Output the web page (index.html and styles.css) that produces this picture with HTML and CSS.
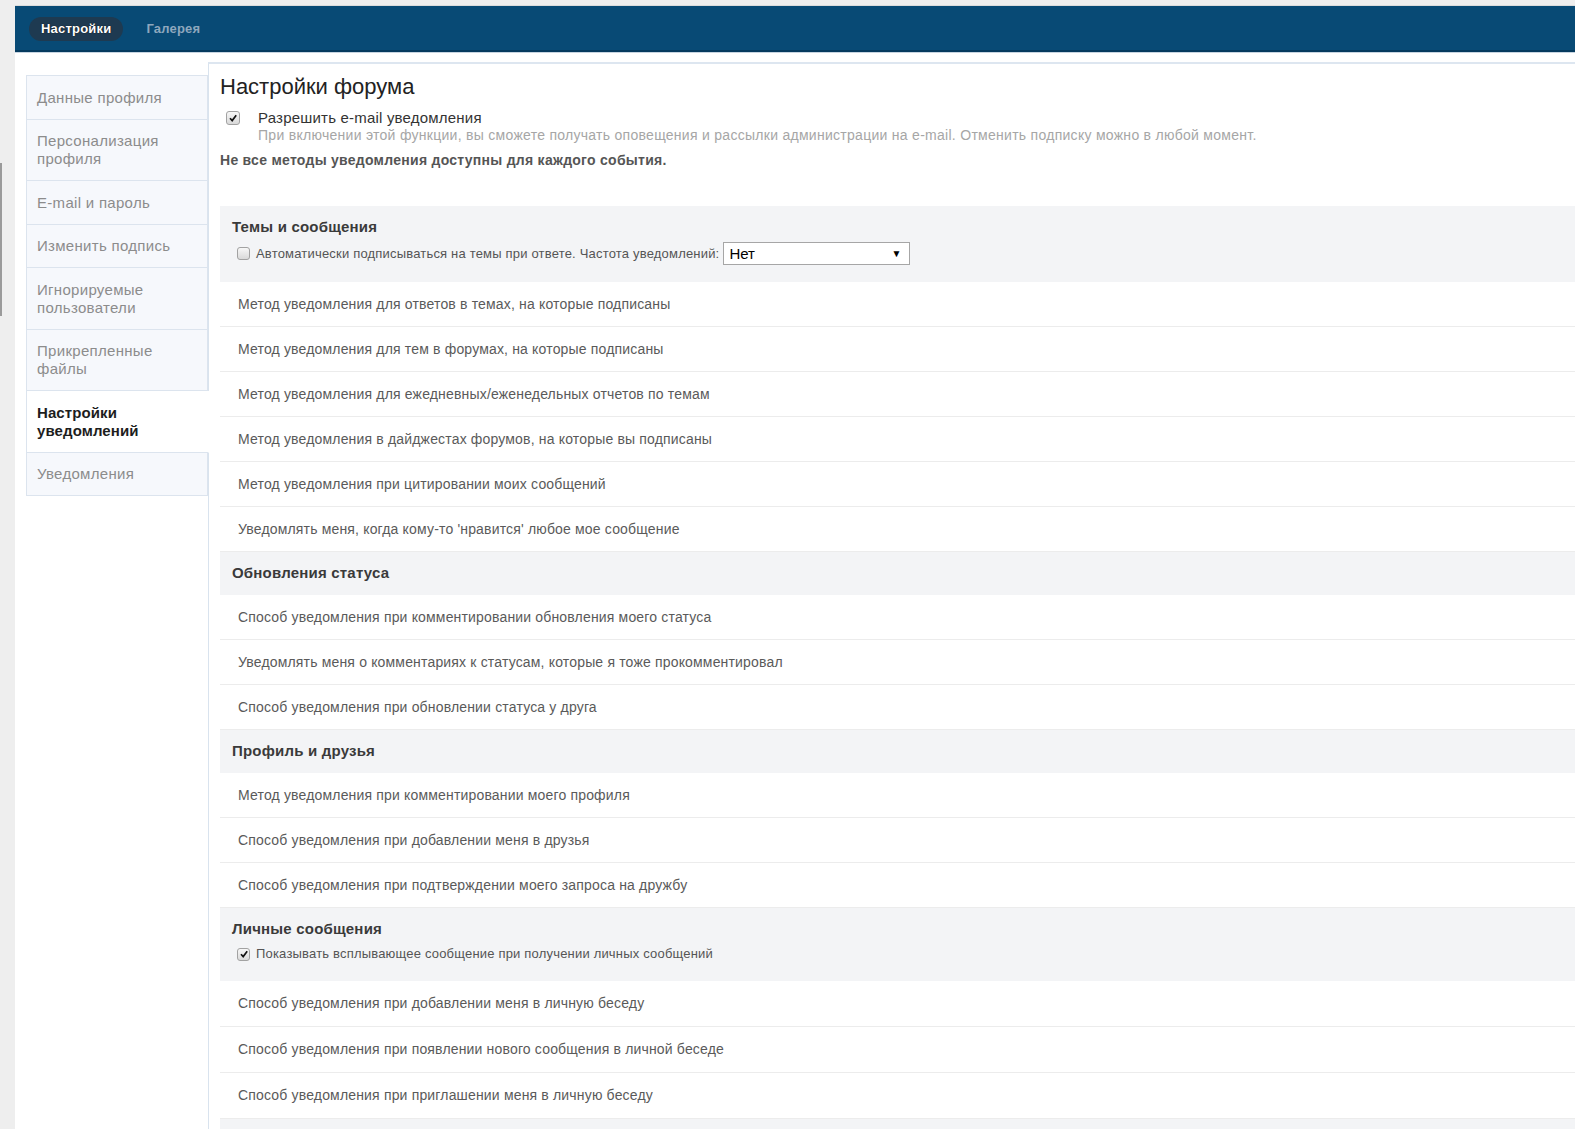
FILE: index.html
```html
<!DOCTYPE html>
<html lang="ru">
<head>
<meta charset="utf-8">
<title>Настройки форума</title>
<link rel="stylesheet" href="styles.css">
</head>
<body>
<div class="frame">
  <div class="wrap">
    <div class="header">
      <a class="tab active">Настройки</a>
      <a class="tab">Галерея</a>
    </div>
    <div class="content">
      <ul class="sidebar">
        <li class="item">Данные профиля</li>
        <li class="item">Персонализация профиля</li>
        <li class="item">E-mail и пароль</li>
        <li class="item">Изменить подпись</li>
        <li class="item">Игнорируемые пользователи</li>
        <li class="item">Прикрепленные файлы</li>
        <li class="item current">Настройки уведомлений</li>
        <li class="item">Уведомления</li>
      </ul>
      <div class="main">
        <h1 class="title">Настройки форума</h1>
        <div class="opt">
          <span class="cb big checked"><svg viewBox="0 0 10 10"><path d="M2 5.2 L4.2 7.6 L8.2 2.2" fill="none" stroke="#111" stroke-width="1.7"/></svg></span>
          <div class="opt-text">
            <div class="opt-label">Разрешить e-mail уведомления</div>
            <div class="opt-desc">При включении этой функции, вы сможете получать оповещения и рассылки администрации на e-mail. Отменить подписку можно в любой момент.</div>
          </div>
        </div>
        <p class="note">Не все методы уведомления доступны для каждого события.</p>

        <div class="section">
          <div class="sec-title">Темы и сообщения</div>
          <div class="sec-row">
            <span class="cb"></span>
            <span class="sec-text">Автоматически подписываться на темы при ответе. Частота уведомлений:</span>
            <span class="select"><span>Нет</span><span class="arrow">▼</span></span>
          </div>
        </div>
        <div class="row">Метод уведомления для ответов в темах, на которые подписаны</div>
        <div class="row">Метод уведомления для тем в форумах, на которые подписаны</div>
        <div class="row">Метод уведомления для ежедневных/еженедельных отчетов по темам</div>
        <div class="row">Метод уведомления в дайджестах форумов, на которые вы подписаны</div>
        <div class="row">Метод уведомления при цитировании моих сообщений</div>
        <div class="row">Уведомлять меня, когда кому-то 'нравится' любое мое сообщение</div>

        <div class="section plain">
          <div class="sec-title">Обновления статуса</div>
        </div>
        <div class="row">Способ уведомления при комментировании обновления моего статуса</div>
        <div class="row">Уведомлять меня о комментариях к статусам, которые я тоже прокомментировал</div>
        <div class="row">Способ уведомления при обновлении статуса у друга</div>

        <div class="section plain">
          <div class="sec-title">Профиль и друзья</div>
        </div>
        <div class="row">Метод уведомления при комментировании моего профиля</div>
        <div class="row">Способ уведомления при добавлении меня в друзья</div>
        <div class="row">Способ уведомления при подтверждении моего запроса на дружбу</div>

        <div class="section pm">
          <div class="sec-title">Личные сообщения</div>
          <div class="sec-row small">
            <span class="cb checked"><svg viewBox="0 0 10 10"><path d="M2 5.2 L4.2 7.6 L8.2 2.2" fill="none" stroke="#111" stroke-width="1.7"/></svg></span>
            <span class="sec-text">Показывать всплывающее сообщение при получении личных сообщений</span>
          </div>
        </div>
        <div class="row tall">Способ уведомления при добавлении меня в личную беседу</div>
        <div class="row tall">Способ уведомления при появлении нового сообщения в личной беседе</div>
        <div class="row tall">Способ уведомления при приглашении меня в личную беседу</div>
        <div class="section tail"></div>
      </div>
    </div>
  </div>
</div>
</body>
</html>
```

FILE: styles.css
```css
* { box-sizing: border-box; }
html, body { margin: 0; padding: 0; }
body {
  background: #eeeeee;
  font-family: "Liberation Sans", Arial, sans-serif;
  height: 1129px;
  overflow: hidden;
}
.frame {
  padding: 5px 0 0 15px;
  position: relative;
}
.frame::before {
  content: "";
  position: absolute;
  left: 0;
  top: 163px;
  width: 2px;
  height: 153px;
  background: #9a9a9a;
}
.wrap {
  background: #ffffff;
  min-height: 1124px;
  border-top: 1px solid #dcdcdc;
}
.header {
  height: 46px;
  background: #084a75;
  border-bottom: 2px solid #053a5e;
  box-shadow: 0 1px 0 #c7d4e0;
  display: flex;
  align-items: center;
  padding-left: 14px;
  gap: 2px;
}
.tab {
  font-size: 13px;
  font-weight: bold;
  letter-spacing: 0.2px;
  color: #8ea7bd;
  padding: 4px 12px;
  line-height: 15px;
  border-radius: 12px;
  margin-top: 1px;
  margin-right: 9px;
}
.tab.active {
  background: #1e3a51;
  color: #ffffff;
  text-shadow: 0 0 1px #000;
  padding: 4px 12px 5px;
}
.content {
  display: flex;
  align-items: flex-start;
  padding-top: 10px;
}
.sidebar {
  list-style: none;
  margin: 13px 0 0 11px;
  padding: 0;
  width: 182px;
  flex: none;
}
.item {
  background: #f6f8fc;
  border: 1px solid #dce4ee;
  border-top: none;
  padding: 12.5px 10px 12px 10px;
  font-size: 15px;
  line-height: 18px;
  letter-spacing: 0.3px;
  color: #8c8c8c;
}
.item:first-child { border-top: 1px solid #dce4ee; }
.item.current {
  background: #ffffff;
  color: #1d1d1d;
  font-weight: bold;
  letter-spacing: 0.1px;
  border-right-color: #ffffff;
  position: relative;
  margin-right: -1px;
  z-index: 1;
}
.main {
  flex: 1;
  border-left: 1px solid #d9e3ee;
  border-top: 2px solid #dde6f0;
  padding: 10px 0 0 11px;
  min-height: 1070px;
}
.title {
  margin: 0;
  font-size: 22px;
  font-weight: normal;
  line-height: 26px;
  color: #222222;
}
.opt {
  display: flex;
  align-items: flex-start;
  margin-top: 9px;
  padding-left: 6px;
}
.cb {
  flex: none;
  display: inline-flex;
  align-items: center;
  justify-content: center;
  width: 13px;
  height: 13px;
  border: 1px solid #a2a2a2;
  border-radius: 3px;
  background: linear-gradient(#f7f7f7, #d9d9d9);
}
.cb svg { width: 10px; height: 10px; }
.cb.big { width: 14px; height: 14px; margin-top: 2px; }
.opt-text { margin-left: 18px; }
.opt-label {
  font-size: 15px;
  line-height: 17px;
  letter-spacing: 0.2px;
  color: #333333;
}
.opt-desc {
  font-size: 14px;
  line-height: 18px;
  letter-spacing: 0.28px;
  color: #a6a6a6;
}
.note {
  margin: 8px 0 37px;
  font-size: 14px;
  line-height: 17px;
  font-weight: bold;
  letter-spacing: 0.27px;
  color: #555555;
}
.section {
  background: #f3f4f6;
  padding: 12px 12px 14px;
}
.section.plain { padding-bottom: 13px; }
.sec-title {
  font-size: 15px;
  line-height: 18px;
  font-weight: bold;
  letter-spacing: 0.2px;
  color: #3a3a3a;
}
.sec-row {
  display: flex;
  align-items: center;
  margin-top: 6px;
  padding-left: 5px;
  margin-bottom: 3px;
}
.sec-row.small { margin-top: 7px; height: 18px; margin-bottom: 4px; }
.sec-text {
  margin-left: 6px;
  font-size: 13px;
  letter-spacing: 0.19px;
  color: #555555;
  line-height: 18px;
}
.select {
  display: inline-flex;
  align-items: center;
  justify-content: space-between;
  margin-left: 4px;
  width: 187px;
  height: 23px;
  border: 1px solid #a6a6a6;
  background: #ffffff;
  padding: 0 8px 0 5px;
  font-size: 15px;
  color: #000000;
}
.select .arrow { font-size: 10px; }
.row {
  padding: 13px 18px;
  font-size: 14px;
  line-height: 18px;
  letter-spacing: 0.17px;
  color: #5a5a5a;
  border-bottom: 1px solid #ececec;
}
.row.tall { padding: 13px 18px 14px; }
.section.tail { height: 20px; padding: 0; }
```
